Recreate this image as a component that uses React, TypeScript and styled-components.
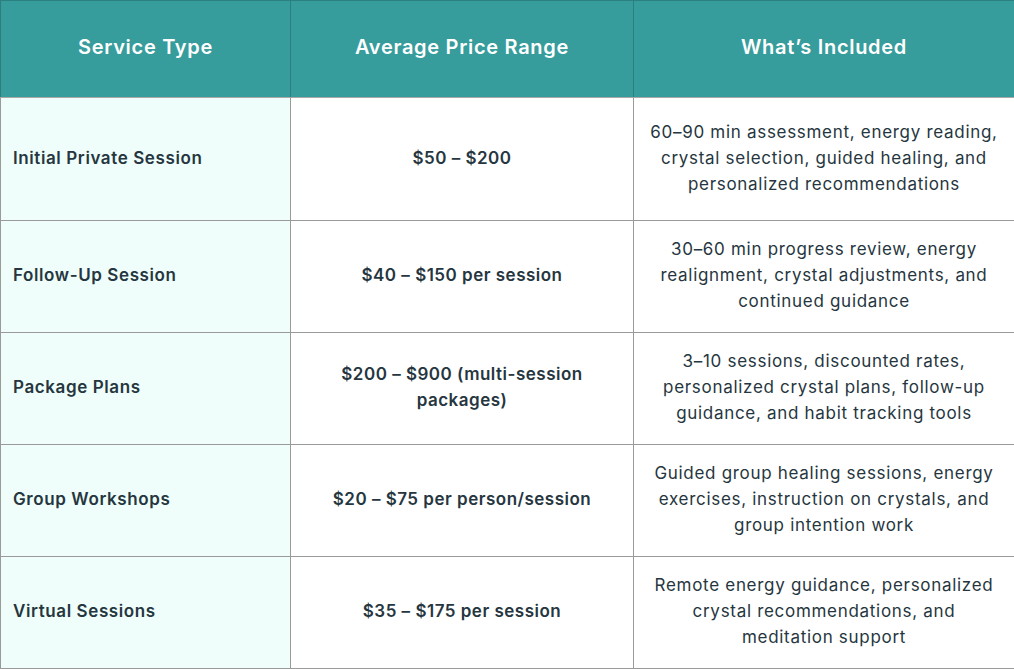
import React from "react";
import styled, { createGlobalStyle } from "styled-components";

const Global = createGlobalStyle`
  html, body { margin: 0; padding: 0; background: #ffffff; }
  body { font-family: "Inter", "Liberation Sans", sans-serif; }
`;

const Table = styled.table`
  width: 1014px;
  border-collapse: collapse;
  table-layout: fixed;
  color: #263640;
`;

const HeadCell = styled.th`
  background: #369c9c;
  color: #ffffff;
  font-weight: 600;
  font-size: 20px;
  letter-spacing: 0.7px;
  height: 92px;
  padding: 0 12px 4px;
  text-align: center;
  border: 1px solid #2d7e7e;
  border-bottom: 1px solid #a8a8a8;
`;

const Row = styled.tr<{ $h: number }>`
  height: ${(p) => p.$h}px;
`;

const NameCell = styled.td`
  background: #effefa;
  font-weight: 600;
  font-size: 17px;
  letter-spacing: 0.6px;
  padding: 0 12px 3px;
  text-align: left;
  border: 1px solid #9a9a9a;
`;

const PriceCell = styled.td`
  font-weight: 600;
  font-size: 17px;
  letter-spacing: 0.5px;
  line-height: 26px;
  padding: 0 40px 3px;
  text-align: center;
  border: 1px solid #9a9a9a;
`;

const InfoCell = styled.td`
  font-weight: 400;
  font-size: 17px;
  letter-spacing: 0.7px;
  line-height: 26px;
  padding: 0 14px 3px;
  text-align: center;
  border: 1px solid #9a9a9a;
`;

const rows = [
  {
    h: 123,
    name: "Initial Private Session",
    price: "$50 – $200",
    info: "60–90 min assessment, energy reading, crystal selection, guided healing, and personalized recommendations",
  },
  {
    h: 112,
    name: "Follow-Up Session",
    price: "$40 – $150 per session",
    info: "30–60 min progress review, energy realignment, crystal adjustments, and continued guidance",
  },
  {
    h: 112,
    name: "Package Plans",
    price: "$200 – $900 (multi-session packages)",
    info: "3–10 sessions, discounted rates, personalized crystal plans, follow-up guidance, and habit tracking tools",
  },
  {
    h: 112,
    name: "Group Workshops",
    price: "$20 – $75 per person/session",
    info: "Guided group healing sessions, energy exercises, instruction on crystals, and group intention work",
  },
  {
    h: 112,
    name: "Virtual Sessions",
    price: "$35 – $175 per session",
    info: "Remote energy guidance, personalized crystal recommendations, and meditation support",
  },
];

export default function App() {
  return (
    <>
      <Global />
      <Table>
        <colgroup>
          <col style={{ width: 290 }} />
          <col style={{ width: 343 }} />
          <col style={{ width: 381 }} />
        </colgroup>
        <thead>
          <tr>
            <HeadCell>Service Type</HeadCell>
            <HeadCell>Average Price Range</HeadCell>
            <HeadCell>What’s Included</HeadCell>
          </tr>
        </thead>
        <tbody>
          {rows.map((r) => (
            <Row key={r.name} $h={r.h}>
              <NameCell>{r.name}</NameCell>
              <PriceCell>{r.price}</PriceCell>
              <InfoCell>{r.info}</InfoCell>
            </Row>
          ))}
        </tbody>
      </Table>
    </>
  );
}
